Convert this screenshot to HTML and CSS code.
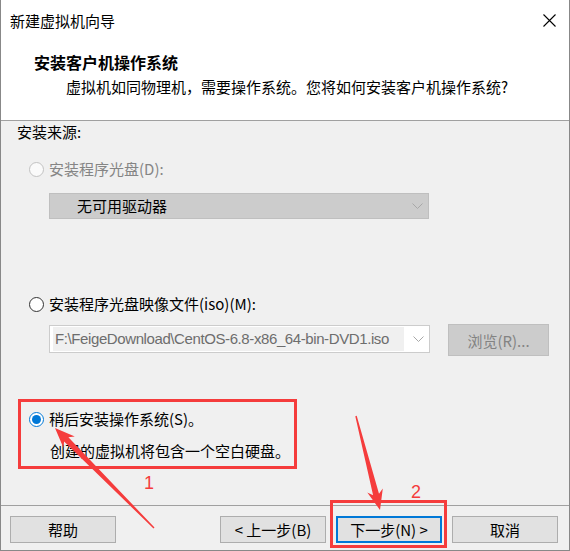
FILE: index.html
```html
<!DOCTYPE html>
<html lang="zh-CN">
<head>
<meta charset="utf-8">
<title>新建虚拟机向导</title>
<link rel="stylesheet" href="styles.css">
</head>
<body>
<div class="window">
  <div class="titlebar">
    <span class="title">新建虚拟机向导</span>
    <svg class="close" width="13" height="13" viewBox="0 0 13 13"><path d="M0.5 0.5 L12.5 12.5 M12.5 0.5 L0.5 12.5" stroke="#000" stroke-width="1.1" fill="none"/></svg>
  </div>
  <div class="header">
    <div class="h-title">安装客户机操作系统</div>
    <div class="h-sub">虚拟机如同物理机，需要操作系统。您将如何安装客户机操作系统?</div>
  </div>
  <div class="content">
    <div class="label">安装来源:</div>
    <div class="radio-row disabled row1"><span class="radio radio-disabled"></span><span>安装程序光盘(D):</span></div>
    <div class="combo combo-disabled">
      <span class="combo-text">无可用驱动器</span>
      <svg class="chev" width="11" height="6" viewBox="0 0 11 6"><path d="M0.5 0.5 L5.5 5.5 L10.5 0.5" stroke="#a8a8a8" stroke-width="1" fill="none"/></svg>
    </div>
    <div class="radio-row row2"><span class="radio"></span><span>安装程序光盘映像文件(iso)(M):</span></div>
    <div class="iso-row">
      <div class="combo combo-iso">
        <span class="iso-field">F:\FeigeDownload\CentOS-6.8-x86_64-bin-DVD1.iso</span>
        <svg class="chev" width="11" height="6" viewBox="0 0 11 6"><path d="M0.5 0.5 L5.5 5.5 L10.5 0.5" stroke="#a8a8a8" stroke-width="1" fill="none"/></svg>
      </div>
      <div class="browse">浏览(R)...</div>
    </div>
    <div class="radio-row row3"><span class="radio radio-checked"></span><span>稍后安装操作系统(S)。</span></div>
    <div class="desc">创建的虚拟机将包含一个空白硬盘。</div>
  </div>
  <div class="footer">
    <div class="btn">帮助</div>
    <div class="btn btn-prev">&lt; 上一步(B)</div>
    <div class="btn btn-next">下一步(N) &gt;</div>
    <div class="btn">取消</div>
  </div>
  <svg class="annot" width="570" height="551" viewBox="0 0 570 551">
    <rect x="19.5" y="400.5" width="276" height="67" fill="none" stroke="#f53c3c" stroke-width="3"/>
    <rect x="331.5" y="501.5" width="114" height="45" fill="none" stroke="#f53c3c" stroke-width="3"/>
    <polygon fill="#f53c3c" points="55,428 74.8,436.6 68.4,437.3 154.5,527.5 153.5,528.5 64.1,441.5 63.4,447.8"/>
    <polygon fill="#f53c3c" points="380,510 367.3,492.6 373.1,495.2 355.3,416.2 356.7,415.8 379,493.8 382.8,488.6"/>
    <text class="num" x="149" y="489" text-anchor="middle">1</text>
    <text class="num" x="416" y="498" text-anchor="middle">2</text>
  </svg>
</div>
</body>
</html>
```

FILE: styles.css
```css
html, body {
  margin: 0;
  padding: 0;
  background: #f0f0f0;
}
body {
  font-family: "Noto Sans CJK SC", "Noto Sans", sans-serif;
  font-size: 15px;
  color: #000;
}
.window {
  position: relative;
  width: 570px;
  height: 551px;
  box-sizing: border-box;
  border: 1px solid #888888;
  border-top: none;
  display: flex;
  flex-direction: column;
  background: #f0f0f0;
}
.titlebar {
  height: 38px;
  box-sizing: border-box;
  background: #fff;
  display: flex;
  align-items: center;
  justify-content: space-between;
  padding: 3px 13px 0 9px;
  line-height: 20px;
}
.close {
  display: block;
}
.header {
  height: 83px;
  box-sizing: border-box;
  background: #fff;
  border-bottom: 1px solid #a0a0a0;
  padding-top: 14px;
}
.h-title {
  font-weight: bold;
  font-size: 16px;
  line-height: 20px;
  padding-left: 33px;
}
.h-sub {
  line-height: 20px;
  margin-top: 5px;
  padding-left: 65px;
}
.content {
  flex: 1;
  display: flex;
  flex-direction: column;
}
.label {
  margin-top: 1px;
  line-height: 20px;
  padding-left: 16px;
}
.radio-row {
  display: flex;
  align-items: center;
  height: 20px;
  line-height: 20px;
  padding-left: 28px;
}
.radio-row.disabled {
  color: #858585;
}
.row1 { margin-top: 17px; }
.row2 { margin-top: 75px; }
.row3 { margin-top: 53px; }
.radio {
  width: 15px;
  height: 15px;
  box-sizing: border-box;
  border: 1px solid #333;
  border-radius: 50%;
  background: #fff;
  margin-right: 5px;
  flex: none;
  display: flex;
  align-items: center;
  justify-content: center;
}
.radio-disabled {
  border-color: #c2c2c2;
  background: #fafafa;
}
.radio-checked {
  border-color: #0078d7;
}
.radio-checked::after {
  content: "";
  width: 9px;
  height: 9px;
  border-radius: 50%;
  background: #0078d7;
}
.combo {
  box-sizing: border-box;
  display: flex;
  align-items: center;
  justify-content: space-between;
}
.combo-disabled {
  margin-top: 14px;
  margin-left: 48px;
  width: 380px;
  height: 26px;
  background: #cccccc;
  border: 1px solid #bfbfbf;
  padding: 0 5px 0 27px;
}
.combo-text {
  line-height: 20px;
}
.chev {
  display: block;
}
.iso-row {
  margin-top: 10px;
  margin-left: 48px;
  display: flex;
  align-items: flex-start;
}
.combo-iso {
  margin-top: 1px;
  width: 381px;
  height: 28px;
  background: #fff;
  border: 1px solid #cccccc;
  padding: 1px 5px 1px 3px;
}
.iso-field {
  width: 351px;
  height: 24px;
  box-sizing: border-box;
  background: #f0f0f0;
  color: #6d6d6d;
  font-family: "Liberation Sans", "Noto Sans CJK SC", sans-serif;
  font-size: 15px;
  letter-spacing: -0.4px;
  line-height: 24px;
  padding-left: 2px;
  white-space: nowrap;
  overflow: hidden;
}
.browse {
  margin-left: 18px;
  width: 101px;
  height: 32px;
  box-sizing: border-box;
  background: #cccccc;
  border: 1px solid #bfbfbf;
  color: #838383;
  display: flex;
  align-items: center;
  justify-content: center;
}
.desc {
  margin-top: 12px;
  line-height: 20px;
  padding-left: 49px;
}
.footer {
  border-top: 1px solid #a0a0a0;
  padding: 10px 11px 7px 9px;
  display: flex;
  gap: 10px;
}
.btn {
  width: 106px;
  height: 27px;
  box-sizing: border-box;
  background: #e1e1e1;
  border: 1px solid #adadad;
  display: flex;
  align-items: center;
  justify-content: center;
  line-height: 20px;
}
.btn-prev {
  margin-left: auto;
}
.btn-next {
  border: 2px solid #0078d7;
}
.annot {
  position: absolute;
  left: -1px;
  top: 0;
  pointer-events: none;
}
.num {
  font-family: "Liberation Sans", sans-serif;
  font-size: 18px;
  fill: #f53c3c;
}
```
